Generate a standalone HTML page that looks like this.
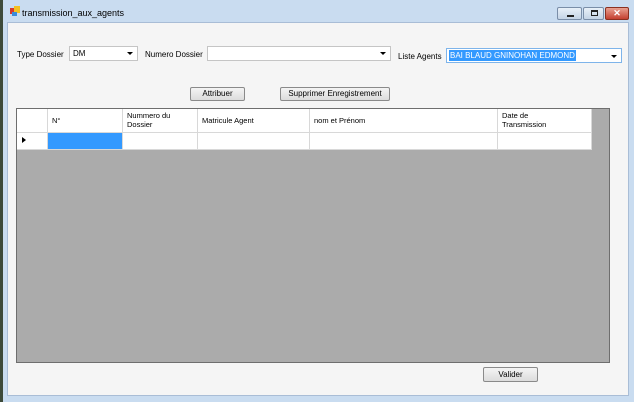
<!DOCTYPE html>
<html><head><meta charset="utf-8"><style>
*{margin:0;padding:0;box-sizing:border-box}
body{width:634px;height:402px;overflow:hidden;background:#c9dcf0;font-family:"Liberation Sans",sans-serif;font-size:8px;color:#000;position:relative}
.abs{position:absolute}
.leftedge{left:0;top:0;width:3px;height:402px;background:#3d4a3a}
.title{left:22px;top:8px;font-size:9px;color:#000}
.client{left:7px;top:22px;width:622px;height:374px;background:#f5f5f5;border:1px solid #a9bdd6}
.lbl{font-size:8px}
.combo{background:#fff;border:1px solid #c5c5c5;height:15px}
.combo .arr{position:absolute;right:4px;top:5px;width:0;height:0;border-left:3px solid transparent;border-right:3px solid transparent;border-top:3px solid #000}
.btn{border:1px solid #8a8a8a;border-radius:2px;background:linear-gradient(#f4f4f4,#dcdcdc);text-align:center;font-size:8px;line-height:12px}
.grid{left:16px;top:108px;width:594px;height:255px;background:#ababab;border:1px solid #6e6e6e}
.cell{position:absolute;background:#fff;border-right:1px solid #d8d8d8;border-bottom:1px solid #d8d8d8;font-size:7.5px;line-height:9px}
.wb{position:absolute;top:7px;height:13px;border:1px solid #7a8ea8;border-radius:2px;background:linear-gradient(#e8f0f8,#c4d4e6)}
</style></head><body>
<div class="abs leftedge"></div>
<div class="abs" style="left:10px;top:8px;width:6px;height:6px;background:#d83a2a"></div>
<div class="abs" style="left:14px;top:6px;width:6px;height:7px;background:#f3c020"></div>
<div class="abs" style="left:12px;top:12px;width:5px;height:4px;background:#3a8ad8"></div>
<div class="abs title">transmission_aux_agents</div>
<div class="wb" style="left:557px;width:25px"><div class="abs" style="left:9px;top:7px;width:7px;height:2px;background:#222"></div></div>
<div class="wb" style="left:583px;width:21px"><div class="abs" style="left:7px;top:2px;width:7px;height:6px;border:1px solid #222;border-top-width:2px"></div></div>
<div class="wb" style="left:605px;width:24px;background:linear-gradient(#e8a090,#c44030);border-color:#8a3020;color:#fff;text-align:center;font-weight:bold;font-size:9px;line-height:11px">✕</div>
<div class="abs client"></div>

<div class="abs lbl" style="left:17px;top:50px">Type Dossier</div>
<div class="abs combo" style="left:69px;top:46px;width:69px"><span class="abs" style="left:3px;top:2px">DM</span><div class="arr"></div></div>
<div class="abs lbl" style="left:145px;top:50px">Numero Dossier</div>
<div class="abs combo" style="left:207px;top:46px;width:184px"><div class="arr"></div></div>
<div class="abs lbl" style="left:398px;top:52px">Liste Agents</div>
<div class="abs combo" style="left:446px;top:48px;width:176px;border-color:#7eb4ea"><span class="abs" style="left:2px;top:1px;background:#3399ff;color:#fff;padding:0 1px;line-height:11px">BAI  BLAUD GNINOHAN EDMOND</span><div class="arr" style="top:6px"></div></div>

<div class="abs btn" style="left:190px;top:87px;width:55px;height:14px">Attribuer</div>
<div class="abs btn" style="left:280px;top:87px;width:110px;height:14px">Supprimer Enregistrement</div>

<div class="abs grid">
<div class="cell" style="left:0;top:0;width:31px;height:24px"></div>
<div class="cell" style="left:31px;top:0;width:75px;height:24px;padding:7px 4px;color:#000">N°</div>
<div class="cell" style="left:106px;top:0;width:75px;height:24px;padding:2px 4px">Nummero du<br>Dossier</div>
<div class="cell" style="left:181px;top:0;width:112px;height:24px;padding:7px 4px">Matricule Agent</div>
<div class="cell" style="left:293px;top:0;width:188px;height:24px;padding:7px 4px">nom et Prénom</div>
<div class="cell" style="left:481px;top:0;width:94px;height:24px;padding:2px 4px">Date de<br>Transmission</div>
<div class="cell" style="left:0;top:24px;width:31px;height:17px"><div class="abs" style="left:5px;top:4px;border-top:3px solid transparent;border-bottom:3px solid transparent;border-left:4px solid #000"></div></div>
<div class="cell" style="left:31px;top:24px;width:75px;height:17px;background:#3399ff"></div>
<div class="cell" style="left:106px;top:24px;width:75px;height:17px"></div>
<div class="cell" style="left:181px;top:24px;width:112px;height:17px"></div>
<div class="cell" style="left:293px;top:24px;width:188px;height:17px"></div>
<div class="cell" style="left:481px;top:24px;width:94px;height:17px"></div>
</div>

<div class="abs btn" style="left:483px;top:367px;width:55px;height:15px;line-height:13px">Valider</div>
</body></html>
